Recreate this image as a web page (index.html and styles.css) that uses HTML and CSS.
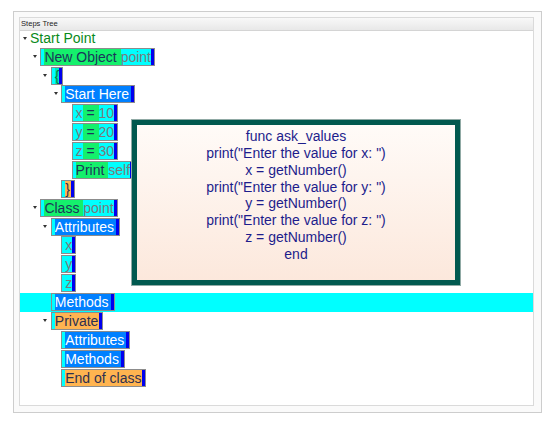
FILE: index.html
```html
<!DOCTYPE html>
<html>
<head>
<meta charset="utf-8">
<link rel="stylesheet" href="styles.css">
</head>
<body>
<div class="frame">
  <div class="panel">
    <div class="header">Steps Tree</div>
    <div class="tree">
      <div class="row root l0"><span class="tw open"></span><span class="root-label">Start Point</span></div>
      <div class="row l1"><span class="tw open"></span><span class="node"><span class="s"></span><span class="k">New Object </span><span class="p">point</span><span class="e"></span></span></div>
      <div class="row l2"><span class="tw open"></span><span class="node"><span class="s"></span><span class="br">{</span><span class="e"></span></span></div>
      <div class="row l3"><span class="tw open"></span><span class="node"><span class="s"></span><span class="b">Start Here</span><span class="e"></span></span></div>
      <div class="row l4"><span class="tw"></span><span class="node"><span class="s"></span><span class="p">x</span><span class="k"> = </span><span class="p">10</span><span class="e"></span></span></div>
      <div class="row l4"><span class="tw"></span><span class="node"><span class="s"></span><span class="p">y</span><span class="k"> = </span><span class="p">20</span><span class="e"></span></span></div>
      <div class="row l4"><span class="tw"></span><span class="node"><span class="s"></span><span class="p">z</span><span class="k"> = </span><span class="p">30</span><span class="e"></span></span></div>
      <div class="row l4"><span class="tw"></span><span class="node"><span class="s"></span><span class="k">Print </span><span class="p">self</span><span class="e"></span></span></div>
      <div class="row l3"><span class="tw"></span><span class="node"><span class="s"></span><span class="o">}</span><span class="e"></span></span></div>
      <div class="row l1"><span class="tw open"></span><span class="node"><span class="s"></span><span class="k">Class </span><span class="p">point</span><span class="e"></span></span></div>
      <div class="row l2"><span class="tw open"></span><span class="node"><span class="s"></span><span class="b">Attributes</span><span class="e"></span></span></div>
      <div class="row l3"><span class="tw"></span><span class="node"><span class="s"></span><span class="p">x</span><span class="e"></span></span></div>
      <div class="row l3"><span class="tw"></span><span class="node"><span class="s"></span><span class="p">y</span><span class="e"></span></span></div>
      <div class="row l3"><span class="tw"></span><span class="node"><span class="s"></span><span class="p">z</span><span class="e"></span></span></div>
      <div class="row l2 sel"><span class="tw"></span><span class="node"><span class="s"></span><span class="b">Methods</span><span class="e"></span></span></div>
      <div class="row l2"><span class="tw open"></span><span class="node"><span class="s"></span><span class="o">Private</span><span class="e"></span></span></div>
      <div class="row l3"><span class="tw"></span><span class="node"><span class="s"></span><span class="b">Attributes</span><span class="e"></span></span></div>
      <div class="row l3"><span class="tw"></span><span class="node"><span class="s"></span><span class="b">Methods</span><span class="e"></span></span></div>
      <div class="row l3"><span class="tw"></span><span class="node"><span class="s"></span><span class="o">End of class</span><span class="e"></span></span></div>
    </div>
  </div>
  <div class="popup">
    <div class="code">func ask_values
print("Enter the value for x: ")
x = getNumber()
print("Enter the value for y: ")
y = getNumber()
print("Enter the value for z: ")
z = getNumber()
end</div>
  </div>
</div>
</body>
</html>
```

FILE: styles.css
```css
* { box-sizing: border-box; }

body {
  margin: 0;
  background: #ffffff;
  font-family: "Liberation Sans", Arial, sans-serif;
}

.frame {
  position: relative;
  margin: 11px 0 0 13px;
  width: 529px;
  height: 402px;
  border: 1px solid #cdcdcd;
  background: #fafafa;
  padding: 5px 7px 6px 5px;
  box-shadow: 0 1px 0 #e2e2e2;
}

.panel {
  height: 100%;
  border: 1px solid #dadada;
  background: #ffffff;
  display: flex;
  flex-direction: column;
}

.header {
  height: 13px;
  flex: none;
  border-bottom: 1px solid #d4d4d4;
  background: linear-gradient(#f8f8f8, #e8e8e8);
  font-size: 7.6px;
  line-height: 12px;
  padding-left: 1px;
  color: #222222;
}

.tree {
  flex: 1;
}

.row {
  display: flex;
  align-items: flex-start;
  height: 18.88px;
}

.row.root { height: 16.7px; }

.row.sel { background: #00ffff; }

.l0 { padding-left: 2px; }
.l1 { padding-left: 12.4px; }
.l2 { padding-left: 22.8px; }
.l3 { padding-left: 33.2px; }
.l4 { padding-left: 43.6px; }

.tw {
  display: block;
  flex: none;
  width: 8px;
  height: 16px;
}

.tw.open::before {
  content: "";
  display: block;
  width: 0;
  height: 0;
  margin: 7px 0 0 0.5px;
  border-left: 2.5px solid transparent;
  border-right: 2.5px solid transparent;
  border-top: 3px solid #333333;
}

.root .tw.open::before { margin-top: 6px; }

.root-label {
  font-size: 14px;
  line-height: 14px;
  color: #0a8a1a;
  white-space: pre;
}

.node {
  display: flex;
  height: 18px;
  border: 1px solid #8c8c8c;
  font-size: 14px;
  line-height: 16px;
  white-space: pre;
}

.node > span { display: block; }

.s { width: 3px; background: #00ffff; }
.e { width: 3px; background: #0000ee; }

.k { background: #14f06c; color: #1b355a; }
.p { background: #00ffff; color: #7a7a7a; }
.b { background: #0080ff; color: #ffffff; padding-right: 2px; }
.o { background: #ffb450; color: #2e3050; padding-right: 1px; }
.br { background: #00e8c0; color: #0a7a3a; }

.popup {
  position: absolute;
  left: 118px;
  top: 108px;
  width: 328px;
  height: 165px;
  border: 5px solid #01594f;
  outline: 1px solid #90aaa5;
  background: linear-gradient(#fffbf8, #fce8dc);
  padding-top: 3.3px;
}

.code {
  white-space: pre;
  text-align: center;
  font-size: 14px;
  line-height: 16.8px;
  color: #1d1d8c;
}
```
